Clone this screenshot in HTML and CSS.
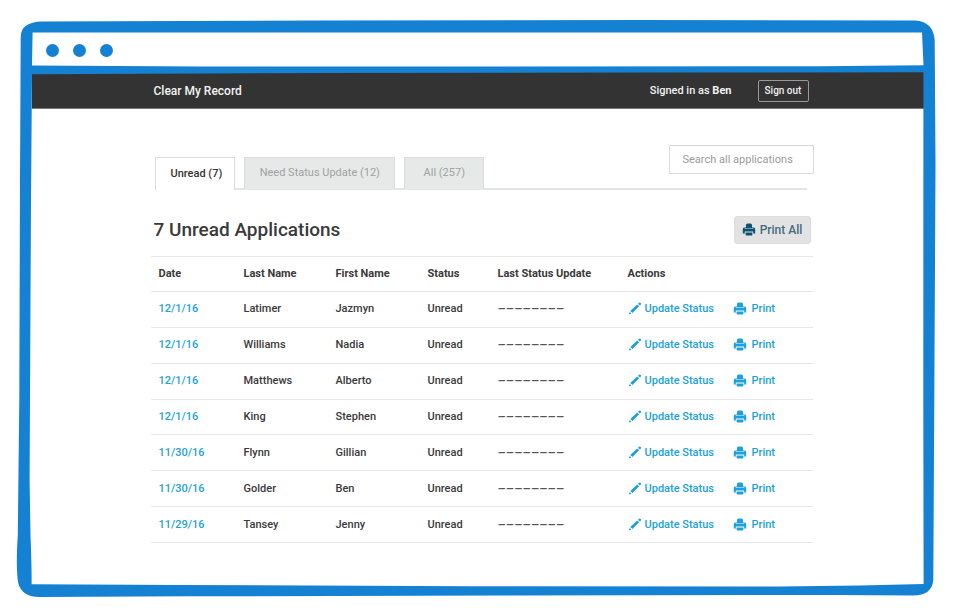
FILE: index.html
```html
<!DOCTYPE html>
<html lang="en">
<head>
<meta charset="utf-8">
<title>Clear My Record</title>
<link rel="stylesheet" href="styles.css">
</head>
<body>
<svg class="symbols" aria-hidden="true">
  <symbol id="printer" viewBox="0 0 14 14">
    <path d="M4 4V2Q4 .4 5.600.4H8.400Q10 .4 10 2V4H10.600V5.200H3.400V4ZM2.200 4.400H2.800V5.800H11.200V4.400H11.800Q13.200 4.400 13.200 6V10.400H11.200V8.600H2.800V10.400H.8V6Q.8 4.400 2.200 4.400ZM3.600 9.400H10.400V11.600Q10.400 12.600 9.400 12.600H4.600Q3.600 12.600 3.600 11.600Z"/>
  </symbol>
  <symbol id="pencil" viewBox="0 0 14 14">
    <path d="M.8 12.600L1.700 9.900L3.500 11.700ZM2.300 9L9.200 2.400L11.100 4.300L4.400 11.100ZM10 1.700L11.200.7Q11.900.2 12.700 1Q13.400 1.700 12.900 2.400L11.800 3.500Z"/>
  </symbol>
</svg>
<div class="stage">
  <div class="titlebar"><i class="dot"></i><i class="dot"></i><i class="dot"></i></div>
  <header class="topbar">
    <div class="container topbar-inner">
      <a class="brand" href="#">Clear My Record</a>
      <span class="signed-in">Signed in as <b>Ben</b></span>
      <button class="sign-out" type="button">Sign out</button>
    </div>
  </header>
  <main class="container">
    <div class="toolbar">
      <nav class="tabs">
        <a class="tab tab-active" href="#">Unread (7)</a>
        <a class="tab tab-wide" href="#">Need Status Update (12)</a>
        <a class="tab" href="#">All (257)</a>
      </nav>
      <input class="search" type="text" placeholder="Search all applications" aria-label="Search all applications">
    </div>
    <div class="heading">
      <h1>7 Unread Applications</h1>
      <button class="print-all" type="button"><svg class="icon"><use href="#printer"/></svg>Print All</button>
    </div>
    <table class="applications">
      <colgroup><col class="c-date"><col class="c-name"><col class="c-name"><col class="c-status"><col class="c-update"><col></colgroup>
      <thead>
        <tr><th>Date</th><th>Last Name</th><th>First Name</th><th>Status</th><th>Last Status Update</th><th>Actions</th></tr>
      </thead>
      <tbody>
        <tr><td><a class="date" href="#">12/1/16</a></td><td>Latimer</td><td>Jazmyn</td><td>Unread</td><td class="dashes">––––––––</td><td><div class="actions"><a class="update" href="#"><svg class="icon"><use href="#pencil"/></svg>Update Status</a><a class="print" href="#"><svg class="icon"><use href="#printer"/></svg>Print</a></div></td></tr>
        <tr><td><a class="date" href="#">12/1/16</a></td><td>Williams</td><td>Nadia</td><td>Unread</td><td class="dashes">––––––––</td><td><div class="actions"><a class="update" href="#"><svg class="icon"><use href="#pencil"/></svg>Update Status</a><a class="print" href="#"><svg class="icon"><use href="#printer"/></svg>Print</a></div></td></tr>
        <tr><td><a class="date" href="#">12/1/16</a></td><td>Matthews</td><td>Alberto</td><td>Unread</td><td class="dashes">––––––––</td><td><div class="actions"><a class="update" href="#"><svg class="icon"><use href="#pencil"/></svg>Update Status</a><a class="print" href="#"><svg class="icon"><use href="#printer"/></svg>Print</a></div></td></tr>
        <tr><td><a class="date" href="#">12/1/16</a></td><td>King</td><td>Stephen</td><td>Unread</td><td class="dashes">––––––––</td><td><div class="actions"><a class="update" href="#"><svg class="icon"><use href="#pencil"/></svg>Update Status</a><a class="print" href="#"><svg class="icon"><use href="#printer"/></svg>Print</a></div></td></tr>
        <tr><td><a class="date" href="#">11/30/16</a></td><td>Flynn</td><td>Gillian</td><td>Unread</td><td class="dashes">––––––––</td><td><div class="actions"><a class="update" href="#"><svg class="icon"><use href="#pencil"/></svg>Update Status</a><a class="print" href="#"><svg class="icon"><use href="#printer"/></svg>Print</a></div></td></tr>
        <tr><td><a class="date" href="#">11/30/16</a></td><td>Golder</td><td>Ben</td><td>Unread</td><td class="dashes">––––––––</td><td><div class="actions"><a class="update" href="#"><svg class="icon"><use href="#pencil"/></svg>Update Status</a><a class="print" href="#"><svg class="icon"><use href="#printer"/></svg>Print</a></div></td></tr>
        <tr><td><a class="date" href="#">11/29/16</a></td><td>Tansey</td><td>Jenny</td><td>Unread</td><td class="dashes">––––––––</td><td><div class="actions"><a class="update" href="#"><svg class="icon"><use href="#pencil"/></svg>Update Status</a><a class="print" href="#"><svg class="icon"><use href="#printer"/></svg>Print</a></div></td></tr>
      </tbody>
    </table>
  </main>
  <!-- Hand-drawn browser frame: outer outline with two cut-outs -->
  <svg class="frame" viewBox="0 0 959 614" preserveAspectRatio="none" aria-hidden="true">
    <path fill="#1581d3" fill-rule="evenodd" d="M20.700 37Q20.700 22 42 21.500L320 20.500L640 20L915 20.600Q933 21.500 934.700 40L935.500 165L934.300 400L933.300 580Q932 595.500 913 595.600L835 595L500 595.500L190 596.300L38 597Q18.500 596 17.500 578Q16 562 17.800 535L19.300 400L20 180ZM32.600 32.600L922 32.600L923.500 65.300L820 66.300L500 66.500L200 66.500L32 65.500ZM32 74.200L320 73L640 72.500L923.400 72.300L923.300 400L923.600 584L860 585.500L780 586.500L470 586.200L180 585L31.600 584.200Q31.800 568 30.500 535L29.600 480L30 400L31 200Z"/>
  </svg>
</div>
</body>
</html>
```
FILE: styles.css
```css
* { box-sizing: border-box; }
body {
  margin: 0;
  background: #fff;
  color: #3a3a3a;
  font: 500 11px/16px Roboto, "Liberation Sans", sans-serif;
}
a { color: inherit; text-decoration: none; }
button, input { font: inherit; }
.symbols { display: none; }
.stage { position: relative; min-height: 100vh; padding: 32px 28px 27px 32px; }
.frame { position: absolute; inset: 0; width: 100%; height: 100%; pointer-events: none; }
.icon { width: 14px; height: 14px; flex: none; fill: currentColor; }
.container { max-width: 662px; margin: 0 auto; }

.titlebar { display: flex; align-items: center; gap: 14px; height: 37px; padding-left: 14px; }
.dot { width: 13px; height: 13px; border-radius: 50%; background: #1581d3; }

.topbar { background: #333; color: #f2f2f2; border-bottom: 1px solid #777; margin: 3px 5px 0 0; padding-left: 5px; }
.topbar-inner { display: flex; align-items: center; height: 36px; padding: 1px 4px 0 3px; }
.brand { margin-right: auto; font-size: 12px; }
.signed-in { margin-right: 26px; }
.signed-in b { font-weight: 700; }
.sign-out {
  width: 51px; height: 22px; padding: 0;
  border: 1px solid #999; border-radius: 2px;
  background: none; color: #eee; font-size: 10px;
}

.toolbar {
  display: flex; justify-content: space-between; align-items: flex-start;
  margin: 36px 6px 0 4px;
  border-bottom: 2px solid #e2e5e4;
}
.tabs { display: flex; gap: 9px; margin: 12px 0 -1px; }
.tab {
  height: 32px; padding: 0 12px; min-width: 80px;
  border: 1px solid #d9dddc; border-bottom: 0;
  background: #e6e9e8; color: #a0a1a1;
  font-weight: 400; line-height: 30px; text-align: center; white-space: nowrap;
}
.tab-wide { min-width: 151px; }
.tab-active { height: 33px; margin-bottom: -1px; padding-left: 15px; background: #fff; color: #333; font-weight: 500; line-height: 32px; }
.search {
  width: 145px; height: 29px; margin-right: -7px; padding: 0 6px 0 13px;
  border: 1px solid #d9d9d9; border-radius: 1px; background: #fff; font-weight: 400;
}
.search::placeholder { color: #9c9a9a; opacity: 1; }

.heading { display: flex; justify-content: space-between; align-items: center; margin: 25px 2px 11px 3px; }
h1 { margin: 0; font-size: 19px; line-height: 30px; font-weight: 500; }
.print-all {
  display: flex; align-items: center; justify-content: center; gap: 4px;
  width: 77px; height: 28px; padding: 0;
  border: 1px solid #dcdcdc; border-radius: 3px;
  background: #e3e3e3; color: #466a82; font-size: 12px;
}
.print-all .icon { color: #115272; }

.applications { width: 100%; height: 287px; table-layout: fixed; border-collapse: collapse; }
.applications tr { height: 35px; border-top: 1px solid #e6e8e8; border-bottom: 1px solid #e6e8e8; }
.applications th, .applications td { padding: 0 0 0 8px; text-align: left; white-space: nowrap; }
.applications th { font-weight: 700; }
.c-date { width: 85px; }
.c-name { width: 92px; }
.c-status { width: 70px; }
.c-update { width: 130px; }
.applications .dashes { font-size: 13px; color: #555; }
.date, .actions { color: #1da1dc; }
.actions { display: flex; }
.actions a { display: flex; align-items: center; gap: 3px; }
.update { width: 105px; }
.actions .print { gap: 5px; }
```
